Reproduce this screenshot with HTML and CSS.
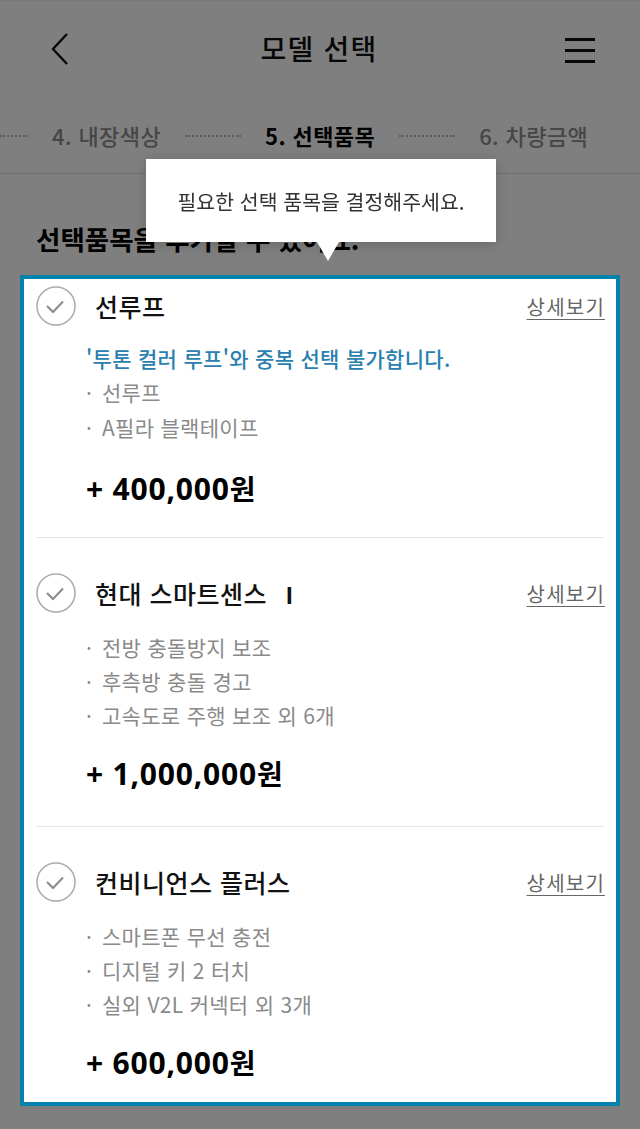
FILE: index.html
```html
<!DOCTYPE html>
<html lang="ko">
<head>
<meta charset="utf-8">
<title>모델 선택</title>
<link rel="stylesheet" href="styles.css">
</head>
<body>
<div class="topline"></div>
<header class="header">
  <svg class="back" width="24" height="34" viewBox="0 0 24 34"><path d="M17 2 L3 17 L17 32" fill="none" stroke="#111" stroke-width="2.4" stroke-linejoin="miter"/></svg>
  <h1 class="title">모델 선택</h1>
  <svg class="menu" width="32" height="28" viewBox="0 0 32 28"><path d="M1 3.5H31M1 14.5H31M1 25.5H31" stroke="#111" stroke-width="2.8"/></svg>
</header>
<nav class="steps">
  <span class="dots dots-start"></span>
  <span class="step">4. 내장색상</span>
  <span class="dots"></span>
  <span class="step step-active">5. 선택품목</span>
  <span class="dots"></span>
  <span class="step">6. 차량금액</span>
</nav>
<main class="main">
  <h2 class="heading">선택품목을 추가할 수 있어요.</h2>
  <div class="overlay"></div>
  <div class="tooltip">필요한 선택 품목을 결정해주세요.</div>
  <section class="card">
    <article class="item item-first">
      <div class="item-head">
        <svg class="check" width="40" height="40" viewBox="0 0 40 40"><circle cx="20" cy="20" r="19" fill="#fff" stroke="#aaa" stroke-width="1.5"/><path d="M11 20 L17 26 L27 15.5" fill="none" stroke="#8a8a8a" stroke-width="2"/></svg>
        <span class="item-title">선루프</span>
        <a class="detail">상세보기</a>
      </div>
      <div class="item-body">
        <p class="note">'투톤 컬러 루프'와 중복 선택 불가합니다.</p>
        <ul class="features">
          <li>선루프</li>
          <li>A필라 블랙테이프</li>
        </ul>
        <p class="price">+ 400,000<span class="won">원</span></p>
      </div>
    </article>
    <article class="item">
      <div class="item-head">
        <svg class="check" width="40" height="40" viewBox="0 0 40 40"><circle cx="20" cy="20" r="19" fill="#fff" stroke="#aaa" stroke-width="1.5"/><path d="M11 20 L17 26 L27 15.5" fill="none" stroke="#8a8a8a" stroke-width="2"/></svg>
        <span class="item-title">현대 스마트센스<span class="roman">I</span></span>
        <a class="detail">상세보기</a>
      </div>
      <div class="item-body">
        <ul class="features">
          <li>전방 충돌방지 보조</li>
          <li>후측방 충돌 경고</li>
          <li>고속도로 주행 보조 외 6개</li>
        </ul>
        <p class="price">+ 1,000,000<span class="won">원</span></p>
      </div>
    </article>
    <article class="item item-last">
      <div class="item-head">
        <svg class="check" width="40" height="40" viewBox="0 0 40 40"><circle cx="20" cy="20" r="19" fill="#fff" stroke="#aaa" stroke-width="1.5"/><path d="M11 20 L17 26 L27 15.5" fill="none" stroke="#8a8a8a" stroke-width="2"/></svg>
        <span class="item-title">컨비니언스 플러스</span>
        <a class="detail">상세보기</a>
      </div>
      <div class="item-body">
        <ul class="features">
          <li>스마트폰 무선 충전</li>
          <li>디지털 키 2 터치</li>
          <li>실외 V2L 커넥터 외 3개</li>
        </ul>
        <p class="price">+ 600,000<span class="won">원</span></p>
      </div>
    </article>
  </section>
</main>
</body>
</html>
```
FILE: styles.css
```css
* { box-sizing: border-box; }
html, body { margin: 0; padding: 0; }
body {
  width: 640px;
  height: 1129px;
  overflow: hidden;
  background: #fff;
  font-family: "Noto Sans CJK KR", "Noto Sans", sans-serif;
  color: #000;
}
.topline { height: 1px; background: #f2f2f2; }
.header {
  height: 93px;
  display: flex;
  align-items: center;
  justify-content: space-between;
  padding: 0 44px 0 50px;
}
.back { display: block; margin-top: 2px; }
.menu { display: block; margin-top: 4px; }
.title {
  margin: 0;
  font-size: 28px;
  font-weight: 500;
  color: #111;
  letter-spacing: 1.2px;
}
.steps {
  height: 80px;
  display: flex;
  align-items: center;
  gap: 24px;
  padding-top: 3px;
  border-bottom: 1px solid #e2e2e2;
  white-space: nowrap;
  overflow: hidden;
}
.dots {
  width: 56px;
  flex: none;
  height: 0;
  border-top: 2px dotted #b8b8b8;
  margin-top: 2px;
}
.dots-start { width: 28px; }
.step {
  font-size: 22px;
  color: #8c8c8c;
  font-weight: 500;
  letter-spacing: 0.4px;
}
.step-active { color: #000; font-weight: 700; }
.main {
  position: relative;
  padding: 47px 20px 0;
}
.heading {
  margin: 0 0 18px 16px;
  font-size: 26.5px;
  line-height: 36px;
  font-weight: 700;
}
.overlay {
  position: fixed;
  inset: 0;
  background: rgba(0, 0, 0, 0.5);
  z-index: 1;
}
.tooltip {
  position: absolute;
  z-index: 3;
  left: 146px;
  top: -15px;
  width: 350px;
  height: 83px;
  background: #fff;
  display: flex;
  align-items: center;
  justify-content: center;
  font-size: 20.5px;
  color: #333;
  box-shadow: 0 2px 12px rgba(0, 0, 0, 0.18);
}
.tooltip::after {
  content: "";
  position: absolute;
  left: 171px;
  bottom: -19px;
  border-left: 11px solid transparent;
  border-right: 11px solid transparent;
  border-top: 19px solid #fff;
}
.card {
  position: relative;
  z-index: 2;
  background: #fff;
  border: 4px solid #0583ad;
  padding: 0 12px;
}
.item {
  padding: 35px 0 34px;
  border-bottom: 1px solid #e6e6e6;
}
.item-first { padding-top: 7px; padding-bottom: 30px; }
.item-last { border-bottom: 0; padding-bottom: 21px; }
.item-head {
  display: flex;
  align-items: center;
  height: 40px;
}
.check { display: block; flex: none; }
.item-title {
  margin-left: 19px;
  font-size: 25px;
  font-weight: 500;
  color: #111;
  letter-spacing: 0.5px;
  flex: 1;
}
.roman {
  margin-left: 19px;
  font-family: "Liberation Sans", sans-serif;
  font-weight: 700;
  font-size: 24px;
}
.detail {
  font-size: 20px;
  color: #666;
  letter-spacing: 1.2px;
  margin-right: -1px;
  text-decoration: underline;
  text-underline-offset: 4px;
  text-decoration-thickness: 1px;
}
.item-body {
  padding-left: 50px;
  padding-top: 17px;
}
.item-first .item-body { padding-top: 15px; }
.note {
  margin: 0;
  font-size: 21px;
  line-height: 34px;
  color: #2a80ae;
  font-weight: 500;
  letter-spacing: 0.3px;
}
.features {
  list-style: none;
  margin: 0;
  padding: 0;
}
.features li {
  font-size: 21px;
  line-height: 34px;
  color: #8a8a8a;
  position: relative;
  padding-left: 16px;
  letter-spacing: 0.3px;
}
.item-first .features li { line-height: 35px; }
.features li::before {
  content: "·";
  position: absolute;
  left: 0;
  top: 0;
  color: #8a8a8a;
}
.price {
  margin: 23px 0 0;
  font-family: "Open Sans", "Noto Sans CJK KR", sans-serif;
  font-size: 30px;
  line-height: 36px;
  font-weight: 700;
  color: #000;
  letter-spacing: 0.8px;
}
.item-first .price { margin-top: 25px; }
.won {
  font-family: "Noto Sans CJK KR", sans-serif;
  font-size: 28px;
}
```
